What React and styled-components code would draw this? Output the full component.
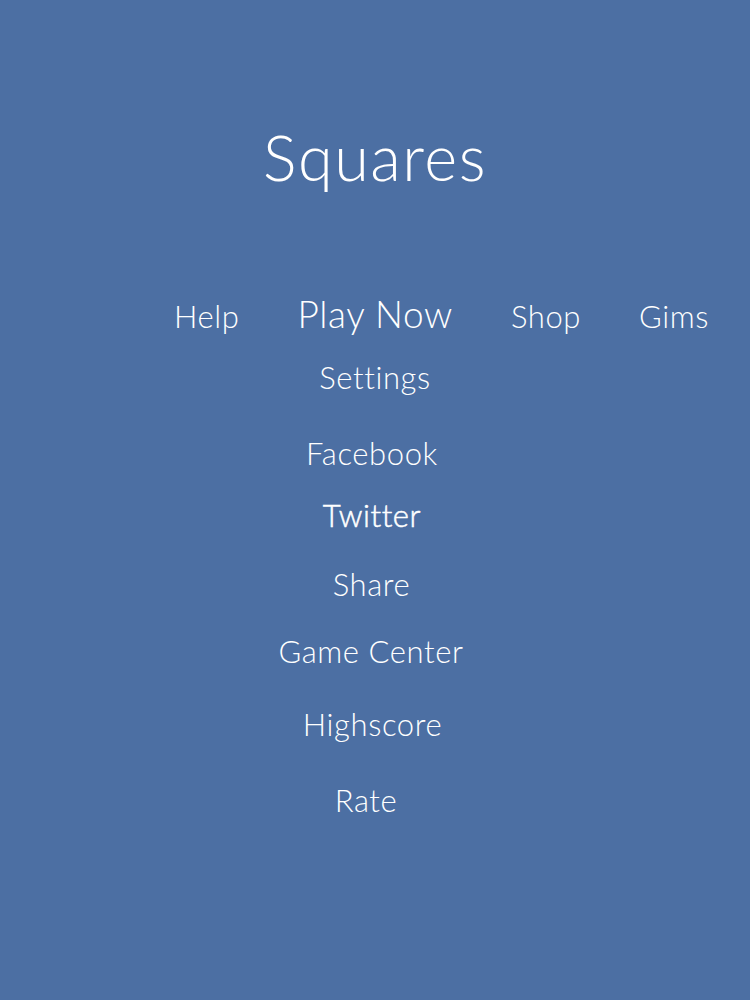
import React from 'react';
import styled, { createGlobalStyle } from 'styled-components';

const Global = createGlobalStyle`
    html, body {
        margin: 0;
        padding: 0;
        background: #4c6fa3;
    }
`

const Page = styled.div`
    min-height: 1000px;
    background: #4c6fa3;
    color: #ffffff;
    font-family: 'Lato', 'Noto Sans', sans-serif;
    font-weight: 300;
    display: flex;
    flex-direction: column;
    align-items: center;
    padding-top: 125px;
    box-sizing: border-box;
`

const Title = styled.h1`
    margin: 0;
    font-size: 63px;
    font-weight: 300;
    line-height: 64px;
    letter-spacing: 1.5px;
`

const NavRow = styled.nav`
    align-self: stretch;
    display: flex;
    align-items: baseline;
    gap: 58px;
    padding-left: 174px;
    margin-top: 105px;
`

const NavLink = styled.a`
    font-size: ${p => p.big ? '37px' : '31px'};
    line-height: 40px;
    color: #ffffff;
    text-decoration: none;
    letter-spacing: 0.6px;
`

const Menu = styled.ul`
    list-style: none;
    margin: 0;
    padding: 0;
    display: flex;
    flex-direction: column;
    align-items: center;
`

const Item = styled.li`
    font-size: 31px;
    line-height: 32px;
    margin-top: ${p => p.gap}px;
    margin-right: ${p => p.shift || 0}px;
    letter-spacing: 0.6px;
    -webkit-text-stroke: ${p => p.strong ? '0.5px #ffffff' : '0'};
`

const items = [
    { label: 'Settings', gap: 25, shift: 0 },
    { label: 'Facebook', gap: 44, shift: 6 },
    { label: 'Twitter', gap: 30, shift: 6, strong: true },
    { label: 'Share', gap: 37, shift: 7 },
    { label: 'Game Center', gap: 35, shift: 8 },
    { label: 'Highscore', gap: 41, shift: 5 },
    { label: 'Rate', gap: 44, shift: 18 },
];

function App() {
    return (<>
        <Global />
        <Page>
            <Title>Squares</Title>
            <NavRow>
                <NavLink href="#">Help</NavLink>
                <NavLink href="#" big>Play Now</NavLink>
                <NavLink href="#">Shop</NavLink>
                <NavLink href="#">Gims</NavLink>
            </NavRow>
            <Menu>
                {items.map(it => (
                    <Item key={it.label} gap={it.gap} shift={it.shift} strong={it.strong}>{it.label}</Item>
                ))}
            </Menu>
        </Page>
    </>);
}

export default App;
